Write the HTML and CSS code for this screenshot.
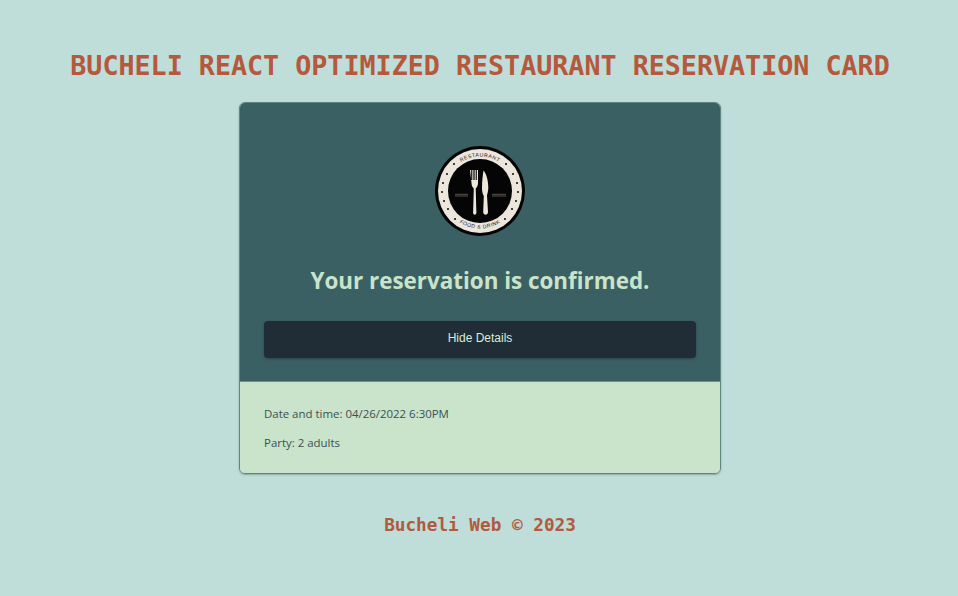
FILE: index.html
```html
<!DOCTYPE html>
<html lang="en">
<head>
    <meta charset="UTF-8">
    <meta name="viewport" content="width=device-width, initial-scale=1.0">
    <title>Bucheli React Optimized Restaurant Reservation Card</title>
    <link rel="stylesheet" href="styles.css">
</head>
<body>
    <h1 class="page-title">BUCHELI REACT OPTIMIZED RESTAURANT RESERVATION CARD</h1>
    <main class="card">
        <section class="card-top">
            <svg class="logo" viewBox="0 0 90 90" role="img" aria-label="Restaurant logo">
                <defs>
                    <path id="arcTop" d="M10.500 45a34.500 34.500 0 0 1 69 0"/>
                    <path id="arcBottom" d="M7.500 45a37.500 37.500 0 0 0 75 0"/>
                </defs>
                <circle cx="45" cy="45" r="45" fill="#050505"/>
                <circle cx="45" cy="45" r="42" fill="#ece6dd"/>
                <circle cx="45" cy="45" r="32" fill="#050505"/>
                <text class="logo-text"><textPath href="#arcTop" startOffset="50%" text-anchor="middle">RESTAURANT</textPath></text>
                <text class="logo-text"><textPath href="#arcBottom" startOffset="50%" text-anchor="middle">FOOD &amp; DRINK</textPath></text>
                <g fill="#1a1a1a">
                    <circle cx="8" cy="37" r="1.100"/>
                    <circle cx="7" cy="46" r="1.100"/>
                    <circle cx="9" cy="55" r="1.100"/>
                    <circle cx="12" cy="28" r="1.100"/>
                    <circle cx="13" cy="63" r="1.100"/>
                    <circle cx="19" cy="18" r="1.100"/>
                    <circle cx="20" cy="73" r="1.100"/>
                    <circle cx="82" cy="37" r="1.100"/>
                    <circle cx="83" cy="46" r="1.100"/>
                    <circle cx="81" cy="55" r="1.100"/>
                    <circle cx="78" cy="28" r="1.100"/>
                    <circle cx="77" cy="63" r="1.100"/>
                    <circle cx="71" cy="18" r="1.100"/>
                    <circle cx="70" cy="73" r="1.100"/>
                </g>
                <g fill="#ece6dd">
                    <path d="M35 24h1.200v10h1.100v-10h1.100v10h1.200v-10h1.100v10h1.100v-10h1.200v13c0 3-1.400 4.500-2.300 5.500l.7 24c0 3-3.300 3-3.300 0l.7-24c-.9-1-2.300-2.500-2.300-5.500z"/>
                    <path d="M48.500 24.500c2.800 3 4.800 10 4.800 17 0 3-.8 6-1.300 8l1 16.500c0 3.500-4.800 3.500-4.800 0l.6-16c-1-2-1.800-4-1.800-8 0-7 .8-13.500 1.500-17.500z"/>
                </g>
                <path class="logo-lines" d="M20 48.300h13M20 50h13M57 48.300h14M57 50h14"/>
            </svg>
            <h2 class="confirm-title">Your reservation is confirmed.</h2>
            <button class="toggle-btn" type="button">Hide Details</button>
        </section>
        <section class="card-details">
            <p>Date and time: 04/26/2022 6:30PM</p>
            <p>Party: 2 adults</p>
        </section>
    </main>
    <footer class="page-footer">Bucheli Web © 2023</footer>
</body>
</html>
```

FILE: styles.css
```css
* {
    box-sizing: border-box;
}
body {
    margin: 0;
    padding-left: 2px;
    min-height: 596px;
    background-color: #bfddd9;
    font-family: "Open Sans", "Noto Sans", sans-serif;
    display: flex;
    flex-direction: column;
    align-items: center;
}
.page-title {
    margin: 0;
    padding: 50px 0 20px;
    font-family: "DejaVu Sans Mono", monospace;
    font-size: 26.7px;
    line-height: 32px;
    font-weight: bold;
    color: #b5583c;
    white-space: nowrap;
}
.card {
    width: 482px;
    border: 1px solid #5f8580;
    border-radius: 6px;
    overflow: hidden;
    box-shadow: 0 1px 2px rgba(0, 0, 0, 0.25);
}
.card-top {
    height: 278px;
    padding: 43px 24px 0;
    background-color: #3b6064;
    display: flex;
    flex-direction: column;
    align-items: center;
}
.logo {
    width: 90px;
    height: 90px;
    display: block;
}
.logo-text {
    font-family: "Liberation Sans", sans-serif;
    font-size: 5.200px;
    fill: #1a1a1a;
    letter-spacing: 0.5px;
}
.logo-lines {
    stroke: #a9a59e;
    stroke-width: 0.5;
    fill: none;
}
.confirm-title {
    margin: 30px 0 0;
    font-size: 22.400px;
    line-height: 30px;
    font-weight: 700;
    color: #c9e4ca;
}
.toggle-btn {
    width: 432px;
    height: 37px;
    margin-top: 25px;
    padding: 0 0 3px;
    border: none;
    border-radius: 4px;
    background-color: #212d36;
    color: #d6ecd7;
    font-family: "Liberation Sans", Arial, sans-serif;
    font-size: 12px;
    cursor: pointer;
    box-shadow: 0 1px 3px rgba(0, 0, 0, 0.3);
}
.card-details {
    height: 92px;
    padding: 23px 24px 0;
    border-top: 1px solid #6d8f8a;
    background-color: #c9e4ca;
    color: #3b5054;
    font-size: 11.450px;
    line-height: 17px;
}
.card-details p {
    margin: 0 0 12px;
}
.page-footer {
    margin-top: 41px;
    font-family: "DejaVu Sans Mono", monospace;
    font-size: 17.700px;
    line-height: 20px;
    font-weight: bold;
    color: #b05a40;
}
```
